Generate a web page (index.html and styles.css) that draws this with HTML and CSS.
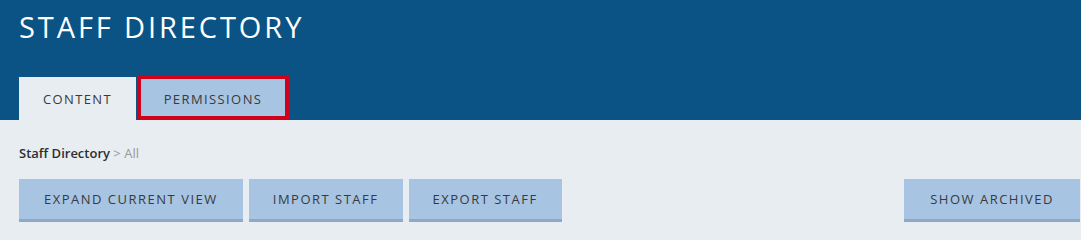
FILE: index.html
```html
<!DOCTYPE html>
<html lang="en">
<head>
<meta charset="utf-8">
<title>Staff Directory</title>
<link rel="stylesheet" href="styles.css">
</head>
<body>
<header class="top">
  <h1 class="title">STAFF DIRECTORY</h1>
  <nav class="tabs">
    <a class="tab tab-active">CONTENT</a>
    <a class="tab tab-focus">PERMISSIONS</a>
  </nav>
</header>
<main class="content">
  <div class="crumbs"><span class="crumb-root">Staff Directory</span> <span class="crumb-rest">&gt; All</span></div>
  <div class="actions">
    <div class="group">
      <button class="btn">EXPAND CURRENT VIEW</button>
      <button class="btn">IMPORT STAFF</button>
      <button class="btn">EXPORT STAFF</button>
    </div>
    <button class="btn btn-wide">SHOW ARCHIVED</button>
  </div>
</main>
</body>
</html>
```
FILE: styles.css
```css
* { box-sizing: border-box; }
body {
  margin: 0;
  background: #e8edf1;
  font-family: "Open Sans", "DejaVu Sans", sans-serif;
  color: #3a3a3a;
}
.top {
  background: #0b5384;
  height: 120px;
  padding: 0 19px;
  display: flex;
  flex-direction: column;
  justify-content: space-between;
}
.title {
  margin: 12px 0 0;
  font-size: 29px;
  line-height: 29px;
  font-weight: 400;
  color: #ffffff;
  letter-spacing: 2.9px;
}
.tabs {
  display: flex;
  align-items: flex-end;
  gap: 1px;
}
.tab {
  display: flex;
  align-items: center;
  justify-content: center;
  font-size: 13px;
  letter-spacing: 1.4px;
  color: #3a3a3a;
}
.tab-active {
  background: #e8edf1;
  width: 117px;
  height: 43px;
}
.tab-focus {
  background: #a7c4e2;
  width: 152px;
  height: 45px;
  border: 4px solid #d0021b;
  padding-top: 2px;
}
.content {
  padding: 0 0 0 19px;
}
.crumbs {
  margin-top: 24px;
  font-size: 13px;
  line-height: 18px;
}
.crumb-root { font-weight: 600; color: #2e2e2e; }
.crumb-rest { color: #999999; }
.actions {
  margin-top: 17px;
  display: flex;
  justify-content: space-between;
  padding-right: 1px;
}
.group {
  display: flex;
  gap: 6px;
}
.btn {
  height: 43px;
  padding: 0 24px;
  background: #a7c4e2;
  border: 0;
  border-bottom: 3px solid #8ea8c6;
  font-family: inherit;
  font-size: 13px;
  letter-spacing: 1.5px;
  color: #3a3a3a;
}
.btn:first-child { padding: 0 25px; }
.btn-wide { padding: 0 26px; }
```
